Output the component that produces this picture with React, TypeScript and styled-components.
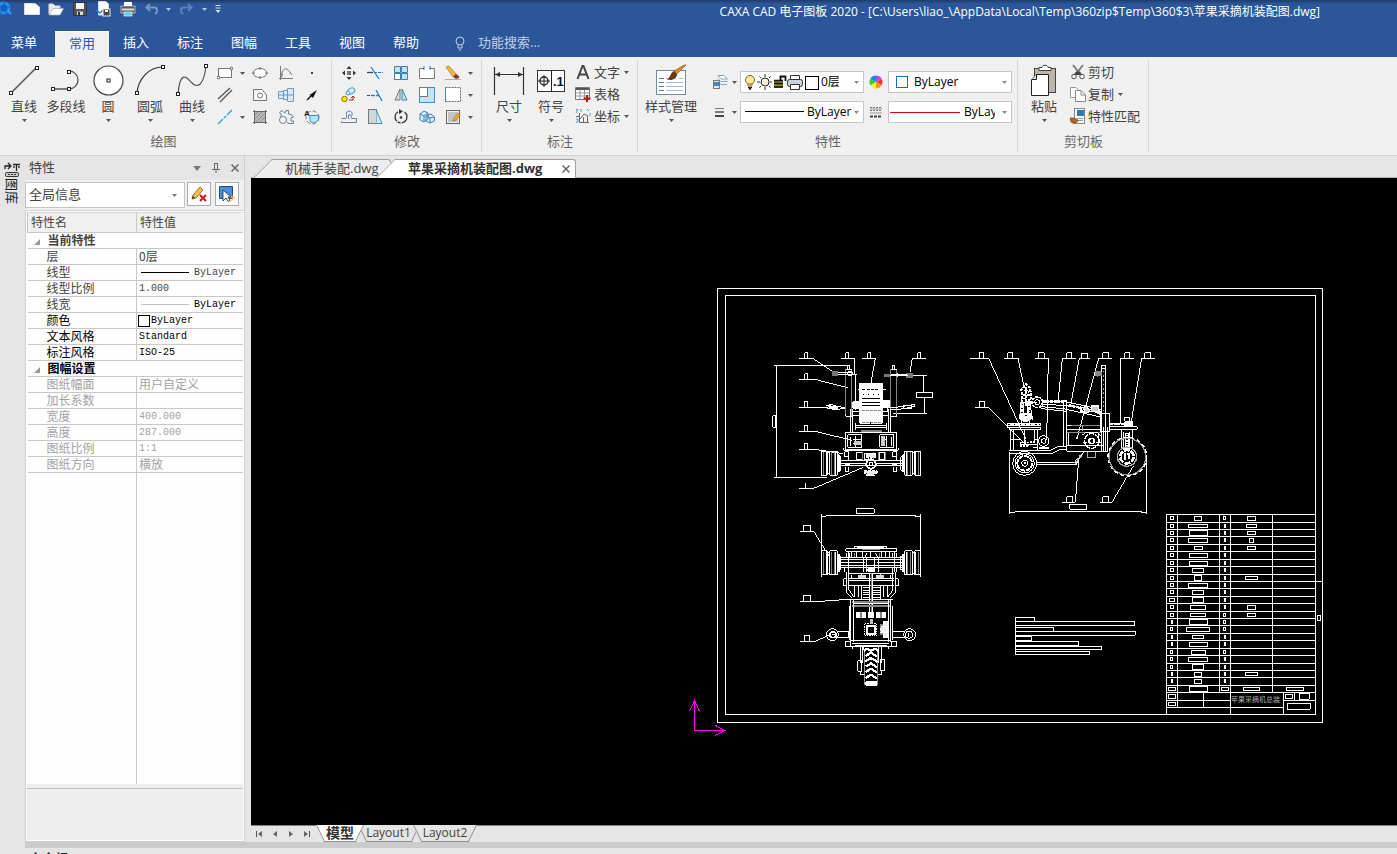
import React from 'react';
import styled, { createGlobalStyle, css } from 'styled-components';

const GlobalStyle = createGlobalStyle`
  * { box-sizing: border-box; }
  html, body { margin: 0; padding: 0; }
  body {
    background: #e5e5e5;
    color: #444;
    font: 13px/16px "Open Sans", "Noto Sans CJK SC", sans-serif;
    overflow: hidden;
  }
  button, input, select { font: inherit; color: inherit; margin: 0; }
  button { padding: 0; border: 0; background: none; cursor: default; white-space: nowrap; }
`;

const Shell = styled.div`
  display: flex;
  flex-direction: column;
  height: 100vh;
`;

/* ---------- title bar ---------- */
const TitleBar = styled.header`
  display: flex;
  align-items: flex-start;
  height: 31px;
  background: linear-gradient(#1d3c6b 0, #2b579a 4px);
  color: #fff;
  font-size: 12px;
`;
const QuickBar = styled.div`
  display: flex;
  width: 250px;
  height: 18px;
  align-items: center;
`;
const QuickButton = styled.button<{ $w: number }>`
  width: ${p => p.$w}px;
  height: 18px;
  display: flex;
  align-items: center;
  justify-content: center;
`;
const TitleText = styled.h1`
  flex: 1;
  margin: 4px 0 0;
  padding-right: 77px;
  text-align: right;
  font-size: 12px;
  font-weight: 400;
  line-height: 16px;
  white-space: nowrap;
`;

const TabRow = styled.nav`
  display: flex;
  height: 26px;
  background: #2b579a;
  color: #fff;
`;
const RibbonTab = styled.button<{ $active?: boolean; $first?: boolean }>`
  width: ${p => (p.$first ? 55 : 54)}px;
  height: 26px;
  padding-bottom: 4px;
  ${p => p.$first && css`padding-right: 7px;`}
  ${p => p.$active && css`background: #f0f0f0; color: #1a5fb4; border-top: 1px solid #fff;`}
`;
const Search = styled.label`
  display: flex;
  align-items: center;
  gap: 12px;
  margin-left: 19px;
  padding-bottom: 2px;
  input {
    width: 120px;
    border: 0;
    padding: 0 0 2px;
    background: none;
    outline: 0;
  }
  input::placeholder { color: #c3cfe2; opacity: 1; }
`;

/* ---------- ribbon ---------- */
const Ribbon = styled.div`
  display: flex;
  height: 99px;
  background: #f0f0f0;
  border-bottom: 1px solid #d2d2d2;
`;
const Group = styled.section<{ $w: number; $pad: number }>`
  position: relative;
  width: ${p => p.$w}px;
  padding: 5px 0 0 ${p => p.$pad}px;
  &::after {
    content: "";
    position: absolute;
    right: 0;
    top: 3px;
    bottom: 3px;
    width: 1px;
    background: #d6d6d6;
  }
`;
const GroupBody = styled.div`
  display: flex;
  height: 66px;
`;
const GroupLabel = styled.h2<{ $pad: number }>`
  margin: 0 0 0 -${p => p.$pad}px;
  font-size: 13px;
  font-weight: 400;
  line-height: 26px;
  text-align: center;
  color: #666;
`;
const BigTool = styled.button<{ $w: number }>`
  width: ${p => p.$w}px;
  display: flex;
  flex-direction: column;
  align-items: center;
  line-height: 16px;
  > svg:first-child { height: 36px; }
  span { margin-bottom: 5px; }
`;
const ToolGrid = styled.div<{ $cols: string }>`
  display: grid;
  grid-template-columns: ${p => p.$cols};
  grid-template-rows: repeat(3, 22px);
`;
const SmallTool = styled.button`
  display: flex;
  align-items: center;
  justify-content: center;
`;
const TextTool = styled.button<{ $icon: number }>`
  display: flex;
  align-items: center;
  height: 22px;
  padding-bottom: 2px;
  > svg:first-child { width: ${p => p.$icon}px; }
  > svg:last-child:not(:first-child) { margin-left: 4px; }
`;
const ToolStack = styled.div<{ $gap?: number }>`
  display: flex;
  flex-direction: column;
  margin-left: ${p => p.$gap ?? 0}px;
`;
const PropertyGrid = styled.div`
  display: grid;
  grid-template-columns: 19px 11px 124px 24px 124px;
  grid-template-rows: 22px 22px;
  row-gap: 8px;
  padding: 9px 0 0 11px;
`;
const Combo = styled.div<{ $pad: number }>`
  display: flex;
  align-items: center;
  padding: 0 4px 0 ${p => p.$pad}px;
  background: #fff;
  border: 1px solid #c6c6c6;
  color: #000;
  font-size: 12px;
  select {
    flex: 1;
    min-width: 0;
    appearance: none;
    border: 0;
    padding: 0;
    background: none;
    outline: 0;
  }
`;

/* ---------- workspace ---------- */
const Workspace = styled.div`
  display: flex;
  flex: 1;
  min-height: 0;
`;
const SideStrip = styled.aside`
  width: 25px;
  padding: 6px 0 0 4px;
`;
const SideTab = styled.button`
  display: flex;
  flex-direction: column;
  align-items: center;
  width: 16px;
  color: #222;
  span { writing-mode: vertical-rl; text-orientation: sideways; line-height: 16px; }
`;
const Panel = styled.section`
  width: 220px;
  margin-right: 6px;
  display: flex;
  flex-direction: column;
  border-right: 1px solid #d0d0d0;
`;
const PanelHead = styled.header`
  display: flex;
  align-items: center;
  height: 24px;
  padding: 0 0 0 4px;
  h2 { flex: 1; margin: 0; padding-bottom: 2px; font-size: 13px; font-weight: 400; }
  button { width: 19px; height: 16px; }
`;
const PanelTools = styled.div`
  display: flex;
  height: 30px;
  padding: 2px 5px 2px 0;
  background: #f0f0f0;
  gap: 4px;
`;
const InfoSelect = styled.div`
  flex: 1;
  margin-right: -2px;
  height: 26px;
  padding: 0 7px 0 3px;
  display: flex;
  align-items: center;
  background: #fff;
  border: 1px solid #c4c4c4;
  select { flex: 1; appearance: none; border: 0; padding: 0 0 2px; background: none; outline: 0; }
`;
const PanelButton = styled.button`
  width: 24px;
  height: 24px;
  display: flex;
  align-items: center;
  justify-content: center;
  background: #fdfdfd;
  border: 1px solid #adadad;
`;
const PropArea = styled.div`
  flex: 1;
  display: flex;
  flex-direction: column;
  padding: 1px 1px 0;
  border: 1px solid #d0d0d0;
  border-right: 0;
  background: #fdfdfd;
`;
const PropTable = styled.table`
  width: 100%;
  border-collapse: collapse;
  table-layout: fixed;
  font-family: "Noto Sans CJK SC", sans-serif;
  font-size: 12px;
  th, td { padding: 0; text-align: left; font-weight: 400; white-space: nowrap; overflow: hidden; line-height: 14px; vertical-align: top; }
  thead th { height: 20px; padding: 2px 0 0 3px; background: #f0f0f0; border: 1px solid #c8c8c8; border-top-color: #d8d8d8; }
  thead th:last-child { border-right: 0; }
`;
const PropRow = styled.tr<{ $tone: 'mid' | 'dark' | 'dim' }>`
  color: ${p => ({ mid: '#444', dark: '#000', dim: '#a3a3a3' })[p.$tone]};
  th { height: 16px; padding-left: 19px; border-bottom: 1px solid #c8c8c8; }
  td { padding-left: 2px; border-bottom: 1px solid #c8c8c8; border-left: 1px solid #c8c8c8; }
`;
const SectionRow = styled.tr<{ $dark?: boolean }>`
  color: ${p => (p.$dark ? '#000' : '#444')};
  th { height: 16px; padding-left: 6px; font-weight: 700; border-bottom: 1px solid #c8c8c8; }
  svg { margin-right: 4px; }
`;
const Value = styled.span<{ $mono?: boolean; $black?: boolean }>`
  display: flex;
  align-items: center;
  height: 14px;
  ${p => p.$black && css`color: #000;`}
  ${p => p.$mono && css`height: 15px; font-family: "Liberation Mono", monospace; font-size: 10px;`}
`;
const Stroke = styled.i<{ $tone: string }>`
  width: 48px;
  height: 1px;
  margin: 0 5px 0 2px;
  background: ${p => p.$tone};
`;
const Swatch = styled.i`
  width: 12px;
  height: 12px;
  margin: 0 1px 0 -1px;
  border: 1px solid #000;
  background: #fff;
`;
const PropSpace = styled.div`
  flex: 1;
  margin-left: 109px;
  border-left: 1px solid #c8c8c8;
`;
const PropHelp = styled.div`
  height: 57px;
  border-top: 4px solid #eee;
  border-bottom: 1px solid #fff;
  background: linear-gradient(#bfbfbf 0 1px, #eee 1px);
`;

const Main = styled.main`
  flex: 1;
  min-width: 0;
  display: flex;
  flex-direction: column;
`;
const DocTabs = styled.nav`
  display: flex;
  height: 22px;
  padding: 3px 0 0 2px;
  border-bottom: 1px solid #b5b5b5;
`;
const DocTab = styled.button<{ $w: number; $active?: boolean }>`
  position: relative;
  width: ${p => p.$w}px;
  height: 19px;
  padding: 0 0 2px 32px;
  text-align: left;
  line-height: 16px;
  z-index: ${p => (p.$active ? 1 : 0)};
  font-weight: ${p => (p.$active ? 700 : 400)};
  ${p => p.$active && css`margin-left: -15px; color: #333;`}
  &::before, &::after {
    content: "";
    position: absolute;
    top: 0;
    bottom: 0;
    z-index: -1;
    background: ${p => (p.$active ? '#fff' : '#ededed')};
    border-top: 1px solid #a0a0a0;
  }
  &::before {
    left: 0;
    width: 60px;
    border-left: 1px solid #a0a0a0;
    transform: skewX(-45deg);
    transform-origin: 0 100%;
  }
  &::after { left: 30px; right: 0; border-right: 1px solid #a0a0a0; border-radius: 0 3px 0 0; }
  svg { position: absolute; right: 6px; top: 6px; }
`;
const Canvas = styled.div`
  flex: 1;
  min-height: 0;
  background: #000;
  overflow: hidden;
  svg { display: block; width: 100%; height: 100%; }
`;
const SheetBar = styled.nav`
  display: flex;
  height: 17px;
  border-top: 1px solid #808080;
  font-size: 12px;
`;
const SheetNav = styled.div`
  display: flex;
  width: 65px;
  button { width: 16px; height: 16px; }
`;
const SheetTab = styled.button<{ $w: number; $active?: boolean }>`
  position: relative;
  z-index: ${p => (p.$active ? 1 : 0)};
  width: ${p => p.$w}px;
  height: 16px;
  margin-right: -6px;
  padding-bottom: 2px;
  line-height: 14px;
  ${p => p.$active && css`font-weight: 700; font-size: 14px; color: #333;`}
  &::before, &::after {
    content: "";
    position: absolute;
    top: -1px;
    bottom: 0;
    width: 50%;
    z-index: -1;
    background: ${p => (p.$active ? '#fff' : '#e5e5e5')};
    border-bottom: 1px solid #909090;
    transform-origin: 0 0;
  }
  &::before { left: 0; border-left: 1px solid #909090; transform: skewX(26deg); }
  &::after { right: 0; border-right: 1px solid #909090; transform: skewX(-26deg); }
`;
const Divider = styled.div`
  height: 6px;
  margin-left: 25px;
  background: #cbcbcb;
`;
const StatusLine = styled.footer`
  height: 6px;
  padding: 2px 0 0 29px;
  overflow: hidden;
  color: #222;
`;

/* ---------- icons ---------- */
const Ico = ({ w = 16, h = 16, children }: { w?: number; h?: number; children: React.ReactNode }) => (
  <svg width={w} height={h} viewBox={`0 0 ${w} ${h}`} fill="none" stroke="#555" aria-hidden="true">{children}</svg>
);
const Caret = ({ color = '#555' }: { color?: string }) => (
  <svg width="5" height="3" viewBox="0 0 5 3" aria-hidden="true"><path d="M0 0H5L2.5 3Z" fill={color} /></svg>
);
const Node = ({ x, y }: { x: number; y: number }) => (
  <rect x={x} y={y} width="3" height="3" fill="#fff" stroke="#222" strokeWidth="1" />
);

const big = {
  line: <Ico w={32} h={36}><path d="M3 31 28 6" stroke="#555" strokeWidth="1.6" /><Node x={1.5} y={29.5} /><Node x={27.5} y={4.5} /></Ico>,
  poly: <Ico w={32} h={36}><path d="M3 27H19A8 8 0 0 0 19 9" stroke="#555" strokeWidth="1.3" /><Node x={1.5} y={25.5} /><Node x={17.5} y={25.5} /><Node x={17.5} y={8.5} /></Ico>,
  circle: <Ico w={32} h={36}><circle cx="16.5" cy="18.5" r="14.5" fill="#fff" stroke="#444" strokeWidth="1.2" /><Node x={15} y={17} /></Ico>,
  arc: <Ico w={32} h={36}><path d="M3 31C4 18 14 5 29 5" stroke="#333" strokeWidth="1.2" /><Node x={1.5} y={29.5} /><Node x={27.5} y={3.5} /></Ico>,
  curve: <Ico w={32} h={36}><path d="M2 32C4 8 11 15 15 20C22 28 28 22 30 4" stroke="#555" strokeWidth="1.2" /><Node x={.5} y={30.5} /><Node x={28.5} y={2.5} /></Ico>,
  dim: <Ico w={32} h={36}><path d="M1.5 5V33M30.5 5V33M2 12.5H30" stroke="#333" strokeWidth="1.2" /><path d="M2 12.5 7 10V15ZM30 12.5 25 10V15Z" fill="#333" stroke="none" /></Ico>,
  symbol: <Ico w={32} h={36}><rect x="2.5" y="8.5" width="27" height="21" fill="#fff" stroke="#333" /><path d="M16.5 8V30M3 19H15M9 13V25" stroke="#222" /><circle cx="9" cy="19" r="4" stroke="#222" strokeWidth="1.4" /><text x="18" y="24" fill="#111" stroke="none" fontFamily="Liberation Sans" fontWeight="700" fontSize="13">.1</text></Ico>,
  style: <Ico w={32} h={36}><rect x="1.5" y="8.5" width="29" height="24" fill="#fff" stroke="#6f8aa5" /><path d="M4 16.5H9M4 20.5H9M4 24.5H9M4 28.5H9" stroke="#5c7c9c" /><path d="M11 20.5H28M11 24.5H28M11 28.5H28M11 16.5H14M24 16.5H28" stroke="#a9b8c6" /><path d="M31 3 22 12 19 9 29 3Z" fill="#d98b2b" stroke="#8a5a20" strokeWidth=".6" /><path d="M22 12 19 9C15 11 16 15 12 17.5C17 19 22 17 22 12Z" fill="#6b3a10" stroke="none" /></Ico>,
  paste: <Ico w={32} h={36}><rect x="6.5" y="6.5" width="21" height="24" fill="#bdb4aa" stroke="#444" /><path d="M11 8.5V5.5H14C14 2.5 20 2.5 20 5.5H23V8.5Z" fill="#fff" stroke="#444" /><path d="M3.500 18 8 12.5H20.5V33.5H3.5Z" fill="#fff" stroke="#222" /><path d="M3.5 17.5H8.5V12.5" stroke="#222" fill="#ddd" /></Ico>,
};

const small = {
  rect: <Ico><rect x="1.5" y="3.5" width="13" height="9" fill="#fff" stroke="#777" /><circle cx="1.5" cy="12.5" r="1.3" fill="#fff" /><circle cx="14.5" cy="3.5" r="1.3" fill="#fff" /></Ico>,
  ellipse: <Ico><ellipse cx="8" cy="8" rx="7" ry="4.5" fill="#fff" stroke="#777" /><path d="M8 2V5M8 11V14M0 8H3M13 8H16" stroke="#777" /></Ico>,
  fn: <Ico><path d="M2.5 1V15M1 13.5H15M3 13C4 3 8 0 14 10" stroke="#777" /><path d="M4.5 8.5V11M12 8V9" stroke="#999" /></Ico>,
  point: <Ico><rect x="7" y="7" width="2" height="2" fill="#444" stroke="none" /></Ico>,
  parallel: <Ico><path d="M1 12 13 1M3 15 15 3" stroke="#555" strokeWidth="1.3" /></Ico>,
  profile: <Ico><path d="M1.5 2.5H10L14.5 8V13.5H1.5Z" fill="#f7f7f7" stroke="#777" /><circle cx="8" cy="8.5" r="2.5" stroke="#777" /></Ico>,
  shaft: <Ico><path d="M.5 4.5H5.5V3.5H9.5V1.500H15.5V14.5H9.5V12.5H5.5V11.5H.5Z" fill="#dbe9f6" stroke="#7e97b3" /><path d="M5.5 4V12M9.5 2V14M0 8H16" stroke="#5b9bd5" /></Ico>,
  arrow: <Ico><path d="M3 13 8 8" stroke="#111" strokeWidth="1.5" /><path d="M13 3 5.5 8 9 11Z" fill="#111" stroke="none" /></Ico>,
  xline: <Ico><path d="M1 15 6 10M7 9 9 7M10 6 15 1" stroke="#2a9fe0" strokeWidth="1.4" /></Ico>,
  hatch: <Ico><rect x="3" y="3" width="10" height="10" fill="#b9b9b9" stroke="none" /><path d="M1 2.5H15M1 13.5H15M2.5 1V15M13.5 1V15" stroke="#666" /><path d="M3 6 6 3M3 10 10 3M4 13 13 4M8 13 13 8" stroke="#8d8d8d" /></Ico>,
  gear: <Ico><path d="M1.5 3.5 4 1.5 6 3.5 8 3V1.500H10.5V5L13.500 5.5 15.500 8 13 9V12H15.5V14.5H11L9 13" fill="#e8eef5" stroke="#6d7f91" /><path d="M1.5 3.5 3.5 6 2 8" stroke="#6d7f91" /><circle cx="5" cy="11" r="3.5" fill="#f4f7fa" stroke="#6d7f91" /></Ico>,
  textArea: <Ico><circle cx="8.5" cy="8.5" r="6.5" stroke="#777" strokeDasharray="4 2" /><path d="M6 6.5H14.5V10C13 14 8 15 6 12Z" fill="#b5e2f7" stroke="#3b93c9" /><text x="0" y="7" fontSize="8" fontWeight="700" fill="#222" stroke="none" fontFamily="Liberation Sans">A</text></Ico>,
  move: <Ico><rect x="6" y="6" width="4" height="4" fill="#777" stroke="none" /><path d="M8 1 10.500 4H5.5ZM8 15 10.500 12H5.5ZM1 8 4 5.5V10.500ZM15 8 12 5.5V10.500Z" fill="#333" stroke="none" /></Ico>,
  trim: <Ico><path d="M0 7.5H6" stroke="#444" strokeWidth="1.3" /><path d="M4 2 12 14" stroke="#2b7cd3" strokeWidth="1.3" /><path d="M7 7.5H16" stroke="#2b7cd3" strokeDasharray="3 1" /></Ico>,
  array: <Ico><path d="M1.5 1.5H7.5V7.5H1.5ZM8.5 1.5H14.5V7.5H8.5ZM8.5 8.5H14.5V14.5H8.5Z" fill="#bfe4f8" stroke="#3f7fae" /><rect x="1.5" y="8.5" width="6" height="6" fill="#fff" stroke="#3f7fae" /></Ico>,
  break: <Ico><path d="M4 3.5H.5V13.5H15.5V3.5H12" fill="#fff" stroke="#777" /><path d="M5 1V5M11 1V5" stroke="#2b7cd3" /><path d="M4 3.5H5M11 3.5H12" /></Ico>,
  erase: <Ico><path d="M1 2 4 1 11 9 8 12Z" fill="#f3b34c" stroke="#b87518" strokeWidth=".7" /><path d="M8 12 11 9 14 11V13L11 14Z" fill="#8c3a2c" stroke="none" /><path d="M0 14.5H16" stroke="#aaa" /></Ico>,
  copyObj: <Ico><circle cx="3.5" cy="12" r="2.7" fill="#ffe600" stroke="#7a7a00" /><ellipse cx="10" cy="4" rx="4" ry="2.8" fill="#d5eefb" stroke="#4b9bcf" transform="rotate(-30 10 4)" /><circle cx="7" cy="6" r="2" fill="#d5eefb" stroke="#4b9bcf" /><path d="M8 13H12V9M10 11 12 9 14 11" stroke="#a22" /></Ico>,
  extend: <Ico><path d="M0 8.5H3M4 8.5H5" stroke="#444" /><path d="M5 8.5H12" stroke="#2b7cd3" strokeDasharray="3 1" strokeWidth="1.3" /><path d="M9 3 15 14" stroke="#2b7cd3" strokeWidth="1.3" /></Ico>,
  mirror: <Ico><path d="M7 2V13H2Z" fill="#ddd" stroke="#777" /><path d="M9 2V13H14Z" fill="#bfe4f8" stroke="#3f7fae" /></Ico>,
  scale: <Ico><rect x=".5" y=".5" width="15" height="15" fill="#bfe4f8" stroke="#3f8fc4" /><rect x=".5" y=".5" width="8" height="9" fill="#fff" stroke="#777" /></Ico>,
  stretch: <Ico><rect x=".5" y=".5" width="15" height="14" fill="#fff" stroke="#666" strokeDasharray="2 1" /><path d="M.5 1V15" stroke="#3f8fc4" strokeDasharray="2 1" /></Ico>,
  offset: <Ico><path d="M.5 9.5H5C7 8 4 4 6 3C9 1 12 3 11 6C10 8 10 9.500 11 9.500H15.5V13.5H.5V12" stroke="#66809a" /><path d="M7.500 10C8 8 7 6 8 5.500C9 5 9.500 6 9 7" stroke="#3f7fae" /></Ico>,
  chamfer: <Ico><rect x="1.5" y=".5" width="8" height="14" fill="#cfd6dc" stroke="#777" /><path d="M9.500 1.5 15 14.5H9.5" fill="#c9e9f9" stroke="#3f8fc4" /></Ico>,
  rotate: <Ico><path d="M11.5 3A6 6 0 1 1 5 2.7" stroke="#333" strokeWidth="1.3" strokeDasharray="14 1 3 1" /><path d="M6 0 10 2.5 6 5Z" fill="#333" stroke="none" /><circle cx="8" cy="8.5" r="1" fill="#333" /></Ico>,
  solid: <Ico><path d="M1 5 5 2 9 4V10L5 13 1 11ZM1 5 5 7V13M5 7 9 4M7 7 12 5 15.5 8V12L11 14 7 12ZM7 7 11 9V14M11 9 15 8" fill="#d5eefb" stroke="#3f7fae" /></Ico>,
  hatchEdit: <Ico><rect x="3" y="3" width="10" height="10" fill="#c4c4c4" stroke="none" /><path d="M1.5 1V15M1 1.5H15M14.5 1V15M1 14.5H15" stroke="#666" /><path d="M8 12 9 9 13 4 15.500 6 11 11Z" fill="#f3a93c" stroke="#9a6418" strokeWidth=".6" /></Ico>,
  text: <Ico><path d="M2.5 15 7.5 2H8.5L13.5 15M4.5 10.500H11.5" stroke="#444" strokeWidth="2" /></Ico>,
  table: <Ico><path d="M.5 1.5H14.5V13.5H.5Z" fill="#fff" stroke="#777" /><path d="M1 3H14" stroke="#555" strokeWidth="2" /><path d="M1 7H14M1 10H14M5 4V13M9.500 4V13" stroke="#999" /><path d="M12 9V16M8.5 12.5H15.5" stroke="#b01818" strokeWidth="2" /></Ico>,
  coord: <Ico><path d="M4.5 5V14.5H14M1 8.5H4M8.5 9V14M12.5 8V14M5 11 9 6 13 8" stroke="#666" /><path d="M1 1 3 3M3 1 1 5M6 1V4M12 1 14 3M1 11H3V14H1M15 5V8" stroke="#4b9bcf" /></Ico>,
  cut: <Ico><path d="M3 1 10 10M13 1 6 10" stroke="#777" strokeWidth="1.8" /><circle cx="4" cy="12.5" r="2.3" stroke="#555" /><circle cx="12" cy="12.5" r="2.3" stroke="#555" /><path d="M6 7.500H10L12 11H4Z" fill="#444" stroke="none" /></Ico>,
  copy: <Ico><path d="M.5 1.5H6L9.5 5V11.5H.5Z" fill="#fff" stroke="#999" /><path d="M5.5 4.5H11L15.5 9V15.5H5.5Z" fill="#fff" stroke="#888" /><path d="M11 4.5V9H15" stroke="#888" /></Ico>,
  match: <Ico><rect x="4.5" y=".5" width="10" height="15" fill="#f6f6f6" stroke="#888" /><rect x="7" y="2" width="7" height="6" fill="#2f77bd" stroke="none" /><path d="M7 10.5H13M7 12.5H13" stroke="#999" /><path d="M0 10H4L8 12C7 16 3 16 1 14Z" fill="#b5651d" stroke="#6b3a10" strokeWidth=".6" /></Ico>,
  layers: <Ico><path d="M6 1.5H12L15.5 5H9ZM6 4.5 9 7.5H15.5M7 8 9 10.5H15" fill="#fff" stroke="#8aa0b4" /><rect x="1.5" y="6.5" width="6" height="8" fill="#e4e9ee" stroke="#777" /><rect x="2" y="8" width="5" height="4" fill="#4d83b5" stroke="none" /></Ico>,
  weight: <Ico><path d="M3 4.5H12" stroke="#777" /><path d="M3 8H12" stroke="#555" strokeWidth="1.5" /><path d="M3 12H12" stroke="#444" strokeWidth="2" /></Ico>,
  linetype: <Ico w={14} h={14}><path d="M1 2.5H13M1 5.5H13" stroke="#777" strokeDasharray="2 1" /><path d="M1 4H13M1 8H13" stroke="#999" /><path d="M1 11.500H13" stroke="#444" strokeWidth="2" strokeDasharray="3 1" /></Ico>,
  wheel: <Ico w={14} h={14}>{['#f33', '#f90', '#fe3', '#3c3', '#28d', '#b4f'].map((c, i) => (
    <path key={c} d="M7 7 7 0.5A6.5 6.5 0 0 1 12.6 3.75Z" fill={c} stroke="none" transform={`rotate(${i * 60 + 60} 7 7)`} />
  ))}</Ico>,
  bulb: <Ico w={12} h={16}><circle cx="6" cy="6" r="4.5" fill="#ffe9a0" stroke="#7a6222" /><path d="M4 10H8V12H4Z" fill="#ffd45a" stroke="#7a6222" strokeWidth=".7" /><path d="M4 13.5H8M5 15H7" stroke="#222" strokeWidth="1.5" /></Ico>,
  sun: <Ico><circle cx="9" cy="8" r="4" fill="#fff6d8" stroke="#222" /><path d="M9 0V3M9 13V16M1 8H4M14 8H16M3.5 2.5 5 4M13 12 14.5 13.5M14.500 2.5 13 4M5 12 3.5 13.5" stroke="#222" /></Ico>,
  lock: <Ico w={15} h={16}><path d="M8.5 8V2.500H13.500V7" stroke="#111" strokeWidth="1.8" /><rect x="2" y="6" width="9" height="8" fill="#8a8620" stroke="none" /><path d="M2 6.5H11M2 9.5H11M2 13H11" stroke="#111" strokeWidth="1.400" /></Ico>,
  printer: <Ico><path d="M3.5 7V1.5H12.5V7" fill="#fff" stroke="#333" /><rect x=".5" y="5.5" width="15" height="7" rx="2" fill="#c9d3dd" stroke="#333" /><path d="M3.5 10.5H12.5V15.5H3.5Z" fill="#fff" stroke="#333" /></Ico>,
};

const quick: [string, number, React.ReactNode][] = [
  ['应用', 20, <Ico w={20} h={18}><circle cx="4" cy="8" r="5" stroke="#1f8fff" strokeWidth="3" strokeDasharray="5 1" /><circle cx="4" cy="8" r="2.5" fill="#0a60d8" stroke="none" /><path d="M8 11 11 14" stroke="#2fa4ff" strokeWidth="2" /></Ico>],
  ['新建', 24, <Ico><path d="M.5 2.5H11L15.5 6V13.5H.5Z" fill="#fff" stroke="#ddd" /></Ico>],
  ['打开', 24, <Ico><path d="M1 13V3H5L7 5H12V7" fill="#e9e9e9" stroke="#ddd" /><path d="M1 14 5 7.5H15.5L12 14Z" fill="#fff" stroke="#aaa" strokeWidth=".7" /></Ico>],
  ['保存', 24, <Ico><path d="M1.5 1.5H14.5V14.5H1.5Z" fill="#555" stroke="#333" /><path d="M4 2H12V8H4Z" fill="#f3f3f3" stroke="none" /><path d="M5 10.5H11V14H5Z" fill="#ddd" stroke="none" /><path d="M7 11V14" stroke="#333" strokeWidth="2" /></Ico>],
  ['另存为', 24, <Ico><path d="M2.5 .5H10L12.5 3V14H2.5Z" fill="#fff" stroke="#ddd" /><path d="M0 9 4 12 7 9" stroke="#2b7cd3" strokeWidth="1.5" /><rect x="7" y="8" width="7" height="7" fill="#444" stroke="#eee" /><rect x="9" y="9" width="3" height="2" fill="#fff" stroke="none" /></Ico>],
  ['打印', 24, <Ico><rect x="4" y="1" width="8" height="5" fill="#fff" stroke="none" /><rect x="1" y="5" width="14" height="7" fill="#5a5a5a" stroke="#eee" strokeWidth=".6" /><path d="M2 8.500H14" stroke="#ddd" strokeWidth="2" /><rect x="4" y="11" width="8" height="4" fill="#62c8f0" stroke="#fff" strokeWidth=".6" /></Ico>],
  ['撤销', 24, <Ico><path d="M6 3 2.500 6.5 6 10M3 6.5H10C14 6.500 14 11 11 13" stroke="#7a95c2" strokeWidth="2" /></Ico>],
  ['撤销列表', 8, <Caret color="#b9c7de" />],
  ['恢复', 28, <Ico><path d="M10 3 13.500 6.5 10 10M13 6.5H6C2 6.500 2 11 5 13" stroke="#5f80b8" strokeWidth="2" /></Ico>],
  ['恢复列表', 8, <Caret color="#b9c7de" />],
  ['自定义快速访问工具栏', 20, <Ico w={8} h={10}><path d="M1.500 1.5H6.500M1.500 4H6.500" stroke="#dbe3ef" /><path d="M1.500 6H6.500L4 9Z" fill="#dbe3ef" stroke="none" /></Ico>],
];

/* ---------- drawing ---------- */
const wheel = (x: number, y: number, flip: boolean) => (
  <g transform={flip ? `translate(${x + 60} ${y}) scale(-1 1)` : `translate(${x} ${y})`}>
    <path d="M1 0H19V72H1ZM26 0H49V72H26ZM19 4H26M19 68H26M49 10H55V62H49M55 16H60V57H55" />
    <path d="M7 2V70M31 2V70M40 2V70" stroke="#858585" />
    <path d="M16 2V70M44 2V70M52 12V60" />
  </g>
);

const FrontView = () => (
  <g transform="translate(514 162) scale(.33333)" strokeWidth="3">
    <path d="M103 55H143L207 97M228 55H268L272 145M291 55H331L318 128M483 55H442L435 97M103 118H150L250 144M103 202H190M103 274H150L262 301M103 328H150L235 341M103 445H146L295 382M123 428V445" />
    <path d="M119 38H128V55H119ZM242 38H251V55H242ZM308 38H317V55H308ZM458 38H467V55H458ZM119 101H128V118H119ZM119 184H128V202H119ZM119 256H128V274H119ZM119 310H128V328H119Z" />
    <path d="M28 76H250M34 76V412M28 412H187M23 227H33V262H23ZM435 106H486M477 106V156M454 157H503V172H454ZM478 172V218M385 220H486" />
    <path d="M242 88V228M260 88V228M377 88V228M395 88V228" stroke="#858585" />
    <path d="M242 88H260M377 88H395M247 88V77H254V88M382 88V77H389V88M242 222V229H260M377 229H395V222" />
    <path d="M201 94H220V107H201ZM357 101H374V110H357ZM422 98H443V113H422Z" fill="#777" stroke="none" />
    <path d="M218 99H260M220 104H276M248 96H262V106H248ZM377 103H425M374 108H430M398 100V112M270 96V105" />
    <path d="M183 196 200 194 218 200 240 202M186 205 210 208 240 206M192 200H218M376 209 410 207 448 200 450 193 432 196 410 200 376 203M415 198H440V206H415Z" />
    <path d="M186 196 218 202 216 208 196 204Z" fill="#fff" />
    <path d="M285 130H352V250H285Z" fill="#fff" />
    <path d="M278 148H290M348 148H362M272 145V210M368 180V215M264 185H285V205H264ZM352 182H374V204H352Z" fill="#fff" />
    <path d="M292 149H346" stroke="#000" strokeDasharray="9 4" />
    <path d="M294 163H350" stroke="#000" strokeDasharray="3 12" />
    <path d="M290 176H346M290 187H346M290 198H346" stroke="#000" />
    <path d="M290 212H350M290 249H350" stroke="#888" strokeDasharray="9 3" />
    <path d="M316 245V252" stroke="#000" />
    <path d="M257 208V277M263 208V277M370 208V277M376 208V277M263 214H285M352 214H370M263 228H285M352 228H370M270 256H365M270 264H365M272 250V270M365 250V270" />
    <path d="M288 274H350" stroke="#888" strokeWidth="6" />
    <path d="M241 277H395V328H241ZM249 285H290V322H249ZM345 285H387V322H345ZM236 324V331H400V324M257 290V318M272 288V320M380 290V318M364 288V320M264 300H290M264 310H290M348 300H364" />
    <path d="M266 302H290V316H266ZM347 288H360V318H347Z" fill="#ccc" stroke="none" />
    <path d="M240 336H252V350H240ZM384 336H396V350H384ZM252 344V360M395 344V360M276 337H292V360H276ZM344 337H360V360H344ZM298 340H312V358H298Z" />
    <path d="M294 336V360M326 336V360M340 336V360M362 336V360" stroke="#888" />
    <path d="M228 363H410M228 371H300M336 371H410M228 378H410M242 380V396H250V380M386 380V396H394V380M240 374H254M382 374H396" />
    <circle cx="318" cy="372" r="14" strokeWidth="6" /><circle cx="318" cy="371" r="5" />
    <path d="M304 340H332V352H304ZM298 392H337V400H328V408H306V400H298Z" fill="#eee" strokeDasharray="9 3" />
    {wheel(168, 334, false)}
    {wheel(408, 334, true)}
  </g>
);

const TopView = () => (
  <g transform="translate(514 322) scale(.33333)" strokeWidth="3">
    <path d="M170 42V230M466 42V230M170 49H184V46H451V49H466M274 26H328V40H274ZM106 94H146L192 168M116 76H137V94H116ZM106 304H165L265 297M116 286H137V304H116ZM106 424H150L198 403M119 406H134V424H119Z" />
    {wheel(168, 153, false)}
    {wheel(408, 153, true)}
    <path d="M242 146H395V154H242ZM268 146V139H366V146M276 142H358M250 154V216M244 158V172H254V158M384 158V172H394V158M388 154V216M240 216V204H252V216M384 216V204H396V216" />
    <path d="M228 174H410M228 180H410M228 188H300M336 188H410M228 198H410M228 204H410" />
    <path d="M260 154V174M276 156V172M284 156H294V172M306 158 300 172M318 152V170M330 158 338 172M350 156V172M362 154V172M374 156V172M296 172V216M306 172V216M330 172V216M340 172V216" />
    <path d="M292 150H346M270 158V172M344 158V172" stroke="#888" />
    <path d="M238 188H252M384 188H398M308 206H330V214H308Z" fill="#fff" />
    <path d="M244 216V276L262 294M252 216V270L268 292M392 216V276L374 294M384 216V270L368 292M236 236H244V258H236ZM392 236H400V258H392Z" />
    <path d="M252 222H386M252 236H386M252 242H386M252 256H386M260 226V236M376 226V236M290 222V236M346 222V236M268 256V290M280 256V290M290 256V300M346 256V300M356 256V290M368 256V290" />
    <path d="M278 230H304M334 230H358" stroke="#ddd" strokeWidth="8" />
    <path d="M294 264H314M294 271H314M294 278H314M294 285H314M294 292H314M324 264H344M324 271H344M324 278H344M324 285H344M324 292H344M258 298H384" />
    <path d="M315 220V336M322 220V336" /><path d="M319 220V336" stroke="#888" />
    <path d="M262 306H376M262 318H376" stroke="#888" strokeWidth="5" />
    <path d="M258 298V426M266 298V426M370 298V426M378 298V426M254 318V420M382 318V420M266 312H370" />
    <path d="M273 337H286V354H273ZM292 337H304V354H292ZM308 337H328V354H308ZM332 337H344V354H332ZM350 337H363V354H350Z" fill="#fff" stroke="none" />
    <path d="M285 337H292V354H285ZM344 337H350V354H344Z" fill="#888" stroke="none" />
    <path d="M306 378H330V402H306Z" strokeWidth="8" /><path d="M300 372H336V408H300Z" strokeDasharray="4 3" />
    <path d="M314 356H324V372H314Z" fill="#bbb" stroke="none" />
    <path d="M344 372H354V404H344Z" fill="#888" stroke="none" />
    <path d="M355 364H368V414H355ZM348 380H366V398H348Z" fill="#eee" strokeDasharray="7 3" />
    <circle cx="202" cy="404" r="18" /><circle cx="204" cy="404" r="9" strokeWidth="5" /><circle cx="434" cy="404" r="18" /><circle cx="432" cy="404" r="11" />
    <path d="M218 396H252V412H208M420 396H384V412H430M200 404H214V410M432 398V410" />
    <path d="M258 422H376M262 430H372M270 436H366M242 424H256V440H242ZM380 424H394V440H380ZM252 440H384M264 440V448M372 440V448" />
    <path d="M286 440V490M294 440V490M342 440V490M350 440V490M278 482H290V514H278ZM346 478H358V512H346ZM286 514V524H298M350 512V524H338M296 440V450M340 440V450" />
    <path d="M300 448V556M338 448V556" stroke="#999" />
    <path d="M296 452 306 446 318 452 330 446 340 452M302 468 318 458 336 470M300 484 318 474 338 486M302 500 318 490 336 502M302 516 318 506 336 518M302 534 318 524 336 536" strokeWidth="7" />
    <path d="M302 546H336V556H302Z" fill="#fff" />
  </g>
);

const SideView = () => (
  <g transform="translate(719 162) scale(.33333)" strokeWidth="3">
    <path d="M0 55H56L164 290M102 55H144L162 140M196 55H235L230 300M318 55H277L264 186M360 55H328L303 190M426 55H386L322 292M491 55H451V250M555 55H515L484 245M16 202H56L160 308M276 487H316L326 360M390 487H426L490 378" />
    <path d="M28 38H41V55H28ZM113 38H128V55H113ZM205 38H223V55H205ZM290 38H305V55H290ZM335 40H353V55H335ZM398 38H416V55H398ZM464 38H479V55H464ZM524 38H542V55H524ZM29 184H44V202H29ZM290 470H308V487H290ZM398 470H416V487H398ZM299 493H350V508H299Z" />
    <path d="M118 335V521M529 345V521M118 517H136V514H514V517H529" />
    <path d="M112 250H212V258H112ZM112 262H212V268H118M122 268V330M130 268V330M202 268V330M194 268V310M122 300H150M150 314H200M196 300H204V322H190M164 268V300M118 331H242L266 319H290M118 340H246L270 328H290" />
    <path d="M120 254H206" strokeDasharray="12 4" />
    <circle cx="164" cy="370" r="36" /><circle cx="164" cy="370" r="29" /><circle cx="164" cy="370" r="22" strokeWidth="6" strokeDasharray="14 3" /><circle cx="164" cy="370" r="9" /><path d="M162 370H168" strokeWidth="5" />
    <circle cx="221" cy="303" r="16" /><circle cx="221" cy="303" r="7" /><path d="M208 322H236V326H208" />
    <path d="M152 308H176V318H152ZM180 306H194M166 290V314" strokeDasharray="7 2" strokeWidth="5" />
    <path d="M150 224 156 176 168 176 178 224 188 238M156 238A12 12 0 1 0 176 238M152 190V228M160 190V228M172 182V228M180 190 188 240" />
    <path d="M150 222H184V236L174 244H158L148 234Z" fill="#fff" />
    <path d="M164 228H170" stroke="#000" />
    <path d="M158 190 154 150 168 132 180 144 184 168 178 190M164 150 178 156M158 164 182 166M168 140V200M156 184V220M178 176V216" strokeWidth="6" strokeDasharray="9 3" />
    <circle cx="202" cy="187" r="16" strokeWidth="5" strokeDasharray="9 2" /><circle cx="202" cy="187" r="8" />
    <path d="M150 188H200M212 182 290 186 392 208M212 200 280 206 396 232M214 192 300 198 390 212M214 206 290 214" />
    <path d="M218 185H284M296 196 340 205M330 210 344 216" strokeDasharray="9 2" strokeWidth="8" />
    <path d="M340 202 350 198 360 214 346 220ZM364 198H386V214H364ZM376 216H390V226" fill="#ccc" strokeWidth="4" />
    <path d="M280 182H290V320H280ZM272 186H280" />
    <path d="M394 80V336M406 80V336M394 76H406V86H394Z" />
    <path d="M376 96H394V108H376ZM384 92V112" fill="#888" stroke="#888" />
    <path d="M400 92V216" stroke="#aaa" strokeDasharray="5 8" />
    <path d="M392 220H418V276H392ZM400 260V336H412V260M290 258H392V276M292 270H392M290 318H400V334H290ZM296 280V316M386 280V316" />
    <path d="M292 277H392M304 257H390" stroke="#888" strokeWidth="4" />
    <path d="M338 258V272M352 336V354H376V336" stroke="#aaa" />
    <circle cx="365" cy="303" r="22" strokeWidth="4" strokeDasharray="16 3" /><circle cx="365" cy="303" r="8" strokeWidth="5" /><path d="M336 286 350 276 384 278 394 290M340 308H350M378 308H392" />
    <circle cx="321" cy="294" r="3" fill="#fff" stroke="none" />
    <path d="M202 367H316M202 374H318L330 352 342 336" /><path d="M314 370 336 342" strokeWidth="7" stroke="#ccc" strokeDasharray="9 2" />
    <path d="M418 250H464M418 260H502V268H418ZM464 232H480V244H464Z" />
    <path d="M464 246H488V258H464Z" fill="#fff" />
    <path d="M420 252H488" strokeWidth="5" strokeDasharray="9 2" />
    <path d="M454 268V326M460 276V326M480 276V326M488 268V326M466 280H476V324H466ZM454 326H488" />
    <path d="M471 284V320" strokeDasharray="5 3" strokeWidth="5" />
    <circle cx="472" cy="350" r="55" stroke="#999" strokeWidth="4" /><circle cx="472" cy="350" r="58" strokeWidth="4" strokeDasharray="12 8" /><circle cx="471" cy="350" r="29" stroke="#aaa" strokeWidth="4" /><circle cx="471" cy="350" r="20" strokeWidth="8" strokeDasharray="18 3" />
    <path d="M465 340V360M471 342H477V358" strokeWidth="4" />
  </g>
);

/* part list: y of each rule, then the box widths of every column, top to bottom */
const rowLines = [28, 52, 73, 94, 118, 139, 163, 184, 208, 229, 250, 274, 295, 319, 340, 361, 385, 406, 430, 451, 475, 496, 517, 541, 562];
const noWidths = [9, 10, 10, 10, 9, 10, 10, 9, 10, 10, 10, 13, 10, 10, 3, 6, 3, 3, 6, 6, 6, 3, 3, 22];
const nameWidths = [22, 58, 55, 58, 25, 55, 55, 34, 22, 58, 34, 34, 46, 46, 55, 70, 34, 55, 43, 58, 34, 22, 22, 55];
const qtyWidths = [6, 3, 3, 3, 3, 3, 3, 3, 3, 3, 3, 3, 3, 6, 6, 6, 3, 3, 6, 3, 3, 3, 3, 22];
const matWidths = [25, 28, 25, 13, 25, 0, 0, 0, 34, 0, 0, 0, 22, 22, 0, 0, 0, 0, 0, 0, 0, 34, 0, 49];

const PartList = () => (
  <g transform="translate(749 327) scale(.33333)" strokeWidth="3">
    <path d="M499 28.5V628M532 28V607M658 28V562M691 28V628M817 28V562M610 562V607M850 562V628M883 562V586M499 586H691M850 586H946M499 607H850M946 229H967M952 332H962V348H952Z" />
    {rowLines.map(y => <path key={y} d={`M499 ${y + 0.5}H946`} />)}
    {noWidths.map((w, i) => {
      const c = (rowLines[i] + rowLines[i + 1]) / 2;
      const nh = [12, 10, 13][i % 3];
      return (
        <g key={i}>
          <rect x={516 - w / 2} y={c - 4} width={w} height={9} />
          <rect x={595 - nameWidths[i] / 2} y={c - nh / 2 + 1} width={nameWidths[i]} height={nh} />
          <rect x={675 - qtyWidths[i] / 2} y={c - 4} width={qtyWidths[i]} height={9} />
          {matWidths[i] > 0 && <rect x={755 - matWidths[i] / 2} y={c - 5} width={matWidths[i]} height={11} />}
        </g>
      );
    })}
    <path d="M859 547H910V557H859ZM505 568H527V580H505ZM505 592H527V602H505ZM856 568H878V580H856ZM898 565H928V583H898ZM862 595H931V613H862Z" />
    <path d="M46 337H104V349M46 349H404V361H46ZM46 367H160V378M46 379H406V391H46ZM46 394H95V406H46ZM46 409H236V421H46ZM46 424H305V434H46ZM46 439H269V449H46ZM46 337V448" />
  </g>
);

const Drawing = () => (
  <svg fill="none" stroke="#fff" shapeRendering="crispEdges" role="img" aria-label="苹果采摘机装配图">
    <path d="M466.5 110.5H1071.5V544.5H466.5ZM474.5 117.5H1064.5V536.5H474.5Z" />
    <FrontView />
    <SideView />
    <TopView />
    <PartList />
    <text x="980" y="524" fontSize="7" fill="#aaa" stroke="none" fontFamily="Noto Sans CJK SC">苹果采摘机总装</text>
    <path d="M443.5 523V552.5H473M438.5 533.5 443.5 522.5 448.5 533.5M464.5 547.5 473.5 552.5 464.5 557.5" stroke="#f0f" />
  </svg>
);

const DropButton = ({ label }: { label: string }) => <SmallTool aria-label={label}><Caret /></SmallTool>;
const Tool = ({ icon, label }: { icon: keyof typeof small; label: string }) => <SmallTool aria-label={label}>{small[icon]}</SmallTool>;
const Big = ({ icon, label, w = 42, drop = true }: { icon: keyof typeof big; label: string; w?: number; drop?: boolean }) => (
  <BigTool $w={w}>{big[icon]}<span>{label}</span>{drop && <Caret />}</BigTool>
);

type Prop = [string, React.ReactNode, 'mid' | 'dark' | 'dim'];
const current: Prop[] = [
  ['层', <Value>0层</Value>, 'mid'],
  ['线型', <Value $mono><Stroke $tone="#000" />ByLayer</Value>, 'mid'],
  ['线型比例', <Value $mono>1.000</Value>, 'mid'],
  ['线宽', <Value $mono $black><Stroke $tone="#c0c0c0" />ByLayer</Value>, 'mid'],
  ['颜色', <Value $mono><Swatch />ByLayer</Value>, 'dark'],
  ['文本风格', <Value $mono>Standard</Value>, 'dark'],
  ['标注风格', <Value $mono>ISO-25</Value>, 'dark'],
];
const sheet: Prop[] = [
  ['图纸幅面', <Value>用户自定义</Value>, 'dim'],
  ['加长系数', <Value />, 'dim'],
  ['宽度', <Value $mono>400.000</Value>, 'dim'],
  ['高度', <Value $mono>287.000</Value>, 'dim'],
  ['图纸比例', <Value $mono>1:1</Value>, 'dim'],
  ['图纸方向', <Value>横放</Value>, 'dim'],
];
const rows = (list: Prop[]) => list.map(([name, value, tone]) => (
  <PropRow key={name} $tone={tone}><th scope="row">{name}</th><td>{value}</td></PropRow>
));
const Expander = () => <svg width="10" height="6" viewBox="0 0 10 6" aria-hidden="true"><path d="M6 0V6H0Z" fill="#999" /></svg>;

export default function App() {
  return (
    <Shell>
      <GlobalStyle />
      <TitleBar>
        <QuickBar>
          {quick.map(([label, w, icon]) => <QuickButton key={label} $w={w} aria-label={label}>{icon}</QuickButton>)}
        </QuickBar>
        <TitleText>CAXA CAD 电子图板 2020 - [C:\Users\liao_\AppData\Local\Temp\360zip$Temp\360$3\苹果采摘机装配图.dwg]</TitleText>
      </TitleBar>
      <TabRow>
        <RibbonTab $first>菜单</RibbonTab>
        <RibbonTab $active>常用</RibbonTab>
        {['插入', '标注', '图幅', '工具', '视图', '帮助'].map(t => <RibbonTab key={t}>{t}</RibbonTab>)}
        <Search>
          <Ico w={14} h={16}><circle cx="8" cy="6" r="4" stroke="#c3cfe2" /><path d="M6 10V13H10V10M7 15H9" stroke="#c3cfe2" /></Ico>
          <input aria-label="功能搜索" placeholder="功能搜索..." />
        </Search>
      </TabRow>

      <Ribbon>
        <Group $w={332} $pad={3}>
          <GroupBody>
            <Big icon="line" label="直线" />
            <Big icon="poly" label="多段线" drop={false} />
            <Big icon="circle" label="圆" />
            <Big icon="arc" label="圆弧" />
            <Big icon="curve" label="曲线" />
            <ToolGrid $cols="24px 10px 26px 26px 26px">
              <Tool icon="rect" label="矩形" /><DropButton label="矩形选项" /><Tool icon="ellipse" label="椭圆" /><Tool icon="fn" label="公式曲线" /><Tool icon="point" label="点" />
              <Tool icon="parallel" label="平行线" /><span /><Tool icon="profile" label="局部放大" /><Tool icon="shaft" label="孔/轴" /><Tool icon="arrow" label="箭头" />
              <Tool icon="xline" label="构造线" /><DropButton label="构造线选项" /><Tool icon="hatch" label="剖面线" /><Tool icon="gear" label="齿形" /><Tool icon="textArea" label="圆弧文字" />
            </ToolGrid>
          </GroupBody>
          <GroupLabel $pad={8}>绘图</GroupLabel>
        </Group>
        <Group $w={150} $pad={4}>
          <GroupBody>
            <ToolGrid $cols="repeat(5, 26px) 9px">
              <Tool icon="move" label="平移" /><Tool icon="trim" label="裁剪" /><Tool icon="array" label="阵列" /><Tool icon="break" label="打断" /><Tool icon="erase" label="删除" /><DropButton label="删除选项" />
              <Tool icon="copyObj" label="平移复制" /><Tool icon="extend" label="延伸" /><Tool icon="mirror" label="镜像" /><Tool icon="scale" label="缩放" /><Tool icon="stretch" label="拉伸" /><DropButton label="拉伸选项" />
              <Tool icon="offset" label="等距线" /><Tool icon="chamfer" label="过渡" /><Tool icon="rotate" label="旋转" /><Tool icon="solid" label="分解" /><Tool icon="hatchEdit" label="编辑填充" /><DropButton label="编辑选项" />
            </ToolGrid>
          </GroupBody>
          <GroupLabel $pad={4}>修改</GroupLabel>
        </Group>
        <Group $w={156} $pad={6}>
          <GroupBody>
            <Big icon="dim" label="尺寸" />
            <Big icon="symbol" label="符号" />
            <ToolStack>
              <TextTool $icon={22}>{small.text}文字<Caret /></TextTool>
              <TextTool $icon={22}>{small.table}表格</TextTool>
              <TextTool $icon={22}>{small.coord}坐标<Caret /></TextTool>
            </ToolStack>
          </GroupBody>
          <GroupLabel $pad={6}>标注</GroupLabel>
        </Group>
        <Group $w={380} $pad={5}>
          <GroupBody>
            <Big icon="style" label="样式管理" w={56} />
            <PropertyGrid>
              <Tool icon="layers" label="图层" /><DropButton label="图层选项" />
              <Combo $pad={3}>
                {small.bulb}{small.sun}{small.lock}{small.printer}
                <Ico w={18}><rect x="2.5" y="2.5" width="13" height="13" fill="#fff" stroke="#000" /></Ico>
                <select aria-label="当前图层"><option>0层</option></select><Caret color="#888" />
              </Combo>
              <Tool icon="wheel" label="颜色" />
              <Combo $pad={6}>
                <Ico w={19}><rect x="1.5" y="2.5" width="11" height="11" fill="#fff" stroke="#0a6fd0" /></Ico>
                <select aria-label="当前颜色"><option>ByLayer</option></select><Caret color="#888" />
              </Combo>
              <Tool icon="weight" label="线宽" /><DropButton label="线宽选项" />
              <Combo $pad={3}>
                <Ico w={63}><path d="M1 7.5H60" stroke="#000" /></Ico>
                <select aria-label="当前线型"><option>ByLayer</option></select><Caret color="#888" />
              </Combo>
              <Tool icon="linetype" label="线型" />
              <Combo $pad={1}>
                <Ico w={74}><path d="M0 8.5H70" stroke="#e00000" /></Ico>
                <select aria-label="当前线宽"><option>ByLayer</option></select><Ico w={12}><path d="M7 7H12L9.5 10Z" fill="#888" stroke="none" /></Ico>
              </Combo>
            </PropertyGrid>
          </GroupBody>
          <GroupLabel $pad={5}>特性</GroupLabel>
        </Group>
        <Group $w={131} $pad={6}>
          <GroupBody>
            <Big icon="paste" label="粘贴" w={40} />
            <ToolStack $gap={4}>
              <TextTool $icon={20}>{small.cut}剪切</TextTool>
              <TextTool $icon={20}>{small.copy}复制<Caret /></TextTool>
              <TextTool $icon={20}>{small.match}特性匹配</TextTool>
            </ToolStack>
          </GroupBody>
          <GroupLabel $pad={6}>剪切板</GroupLabel>
        </Group>
      </Ribbon>

      <Workspace>
        <SideStrip>
          <SideTab>
            <Ico><path d="M1 7V4H6M4 1 7 4 4 7M9 2.5H16M12.5 3V9M10 4V6M15 4V6" stroke="#222" strokeWidth="1.3" /><rect x="1.5" y="10.5" width="13" height="4" rx="1" fill="#ccc" stroke="#333" /><path d="M4 12.5H12" stroke="#333" strokeDasharray="2 1" /></Ico>
            <span>图库</span>
          </SideTab>
        </SideStrip>
        <Panel>
          <PanelHead>
            <h2>特性</h2>
            <button aria-label="面板菜单"><Ico w={10} h={10}><path d="M1 3H9L5 8Z" fill="#777" stroke="none" /></Ico></button>
            <button aria-label="自动隐藏"><Ico w={10} h={10}><path d="M3.5 1V6M6.5 1V6M3 .5H7M1 6.5H9M5 7V10" stroke="#666" /></Ico></button>
            <button aria-label="关闭"><Ico w={10} h={10}><path d="M1.5 1.5 8.5 8.5M8.5 1.5 1.5 8.5" stroke="#666" strokeWidth="1.5" /></Ico></button>
          </PanelHead>
          <PanelTools>
            <InfoSelect><select aria-label="选择对象"><option>全局信息</option></select><Caret color="#777" /></InfoSelect>
            <PanelButton aria-label="清除选择"><Ico><path d="M1 13 2 9 9 1 12 4 5 12Z" fill="#f2c14a" stroke="#7a5a1a" strokeWidth=".8" /><path d="M1 13 2 10 4 12Z" fill="#333" stroke="none" /><path d="M9 9 15 15M15 9 9 15" stroke="#d01818" strokeWidth="2" /></Ico></PanelButton>
            <PanelButton aria-label="快速选择"><Ico><path d="M.5 .5H13.5V12.5H.5Z" fill="#4a90d9" stroke="#1f4f86" /><path d="M4 4V15L7 12 9 15.5 11 14.5 9 11H12Z" fill="#fff" stroke="#222" strokeWidth=".8" /><path d="M13 9 11 12H13L12 15.5 16 11H14Z" fill="#f5a623" stroke="none" /></Ico></PanelButton>
          </PanelTools>
          <PropArea>
            <PropTable>
              <colgroup><col style={{ width: 109 }} /><col /></colgroup>
              <thead><tr><th scope="col">特性名</th><th scope="col">特性值</th></tr></thead>
              <tbody>
                <SectionRow><th colSpan={2}><Expander />当前特性</th></SectionRow>
                {rows(current)}
                <SectionRow $dark><th colSpan={2}><Expander />图幅设置</th></SectionRow>
                {rows(sheet)}
              </tbody>
            </PropTable>
            <PropSpace />
            <PropHelp />
          </PropArea>
        </Panel>
        <Main>
          <DocTabs>
            <DocTab $w={138}>机械手装配.dwg</DocTab>
            <DocTab $w={200} $active>苹果采摘机装配图.dwg<Ico w={8} h={8}><path d="M.5 .5 7.5 7.5M7.5 .5 .5 7.5" stroke="#666" strokeWidth="1.5" /></Ico></DocTab>
          </DocTabs>
          <Canvas><Drawing /></Canvas>
          <SheetBar>
            <SheetNav>
              <button aria-label="第一个"><Ico w={8} h={8}><path d="M1.5 1V7" /><path d="M7 1V7L3 4Z" fill="#666" stroke="none" /></Ico></button>
              <button aria-label="上一个"><Ico w={8} h={8}><path d="M6 1V7L2 4Z" fill="#666" stroke="none" /></Ico></button>
              <button aria-label="下一个"><Ico w={8} h={8}><path d="M2 1V7L6 4Z" fill="#666" stroke="none" /></Ico></button>
              <button aria-label="最后一个"><Ico w={8} h={8}><path d="M6.5 1V7" /><path d="M1 1V7L5 4Z" fill="#666" stroke="none" /></Ico></button>
            </SheetNav>
            <SheetTab $w={48} $active>模型</SheetTab>
            <SheetTab $w={61}>Layout1</SheetTab>
            <SheetTab $w={64}>Layout2</SheetTab>
          </SheetBar>
        </Main>
      </Workspace>
      <Divider />
      <StatusLine>命令行</StatusLine>
    </Shell>
  );
}
